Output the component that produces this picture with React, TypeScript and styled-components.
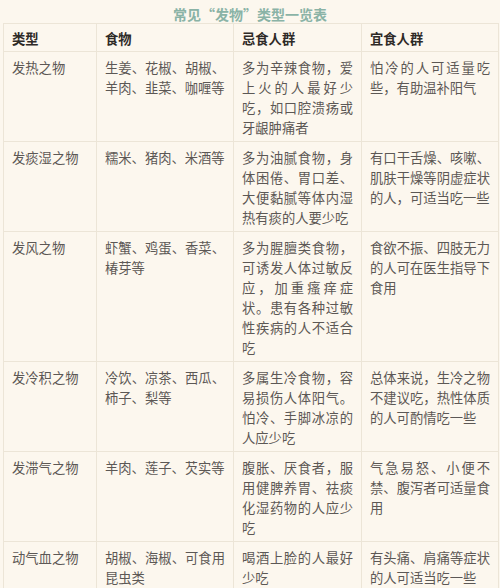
import React from 'react';
import styled, { createGlobalStyle } from 'styled-components';

const GlobalStyle = createGlobalStyle`
  html, body {
    margin: 0;
    padding: 0;
    background: #fcf7ee;
  }
  body {
    font-family: "Liberation Sans", "Noto Sans CJK SC", sans-serif;
  }
`;

const Page = styled.div`
  width: 500px;
  height: 588px;
  overflow: hidden;
  background: #fcf7ee;
`;

const Title = styled.h2`
  margin: 0;
  height: 23px;
  padding-top: 4px;
  box-sizing: border-box;
  line-height: 20px;
  text-align: center;
  font-size: 14px;
  font-weight: bold;
  color: #8ab3a6;
  font-family: "Noto Sans CJK SC", sans-serif;
`;

const Table = styled.table`
  margin-left: 3px;
  width: 495px;
  table-layout: fixed;
  border-collapse: collapse;
  font-family: "Noto Sans CJK SC", sans-serif;
  font-size: 13.3px;
  line-height: 20px;
`;

const Cell = styled.td<{ $head?: boolean }>`
  border: 1px solid #ece5d7;
  padding: ${({ $head }) => ($head ? '5px 8px 2px 8px' : '6px 8px 3px 8px')};
  vertical-align: top;
  text-align: justify;
  color: ${({ $head }) => ($head ? '#2e2a27' : '#5c5855')};
  font-weight: ${({ $head }) => ($head ? 'bold' : 'normal')};
`;

const cols = [93, 137, 128, 137];

const header = ['类型', '食物', '忌食人群', '宜食人群'];

const rows: string[][] = [
  ['发热之物', '生姜、花椒、胡椒、羊肉、韭菜、咖喱等', '多为辛辣食物，爱上火的人最好少吃，如口腔溃疡或牙龈肿痛者', '怕冷的人可适量吃些，有助温补阳气'],
  ['发痰湿之物', '糯米、猪肉、米酒等', '多为油腻食物，身体困倦、胃口差、大便黏腻等体内湿热有痰的人要少吃', '有口干舌燥、咳嗽、肌肤干燥等阴虚症状的人，可适当吃一些'],
  ['发风之物', '虾蟹、鸡蛋、香菜、椿芽等', '多为腥膻类食物，可诱发人体过敏反应，加重瘙痒症状。患有各种过敏性疾病的人不适合吃', '食欲不振、四肢无力的人可在医生指导下食用'],
  ['发冷积之物', '冷饮、凉茶、西瓜、柿子、梨等', '多属生冷食物，容易损伤人体阳气。怕冷、手脚冰凉的人应少吃', '总体来说，生冷之物不建议吃，热性体质的人可酌情吃一些'],
  ['发滞气之物', '羊肉、莲子、芡实等', '腹胀、厌食者，服用健脾养胃、祛痰化湿药物的人应少吃', '气急易怒、小便不禁、腹泻者可适量食用'],
  ['动气血之物', '胡椒、海椒、可食用昆虫类', '喝酒上脸的人最好少吃', '有头痛、肩痛等症状的人可适当吃一些'],
];

export default function App() {
  return (
    <Page>
      <GlobalStyle />
      <Title>常见“发物”类型一览表</Title>
      <Table>
        <colgroup>
          {cols.map((w, i) => (
            <col key={i} style={{ width: w }} />
          ))}
        </colgroup>
        <thead>
          <tr>
            {header.map((h) => (
              <Cell as="th" $head key={h}>
                {h}
              </Cell>
            ))}
          </tr>
        </thead>
        <tbody>
          {rows.map((r) => (
            <tr key={r[0]}>
              {r.map((c, i) => (
                <Cell key={i}>{c}</Cell>
              ))}
            </tr>
          ))}
        </tbody>
      </Table>
    </Page>
  );
}
